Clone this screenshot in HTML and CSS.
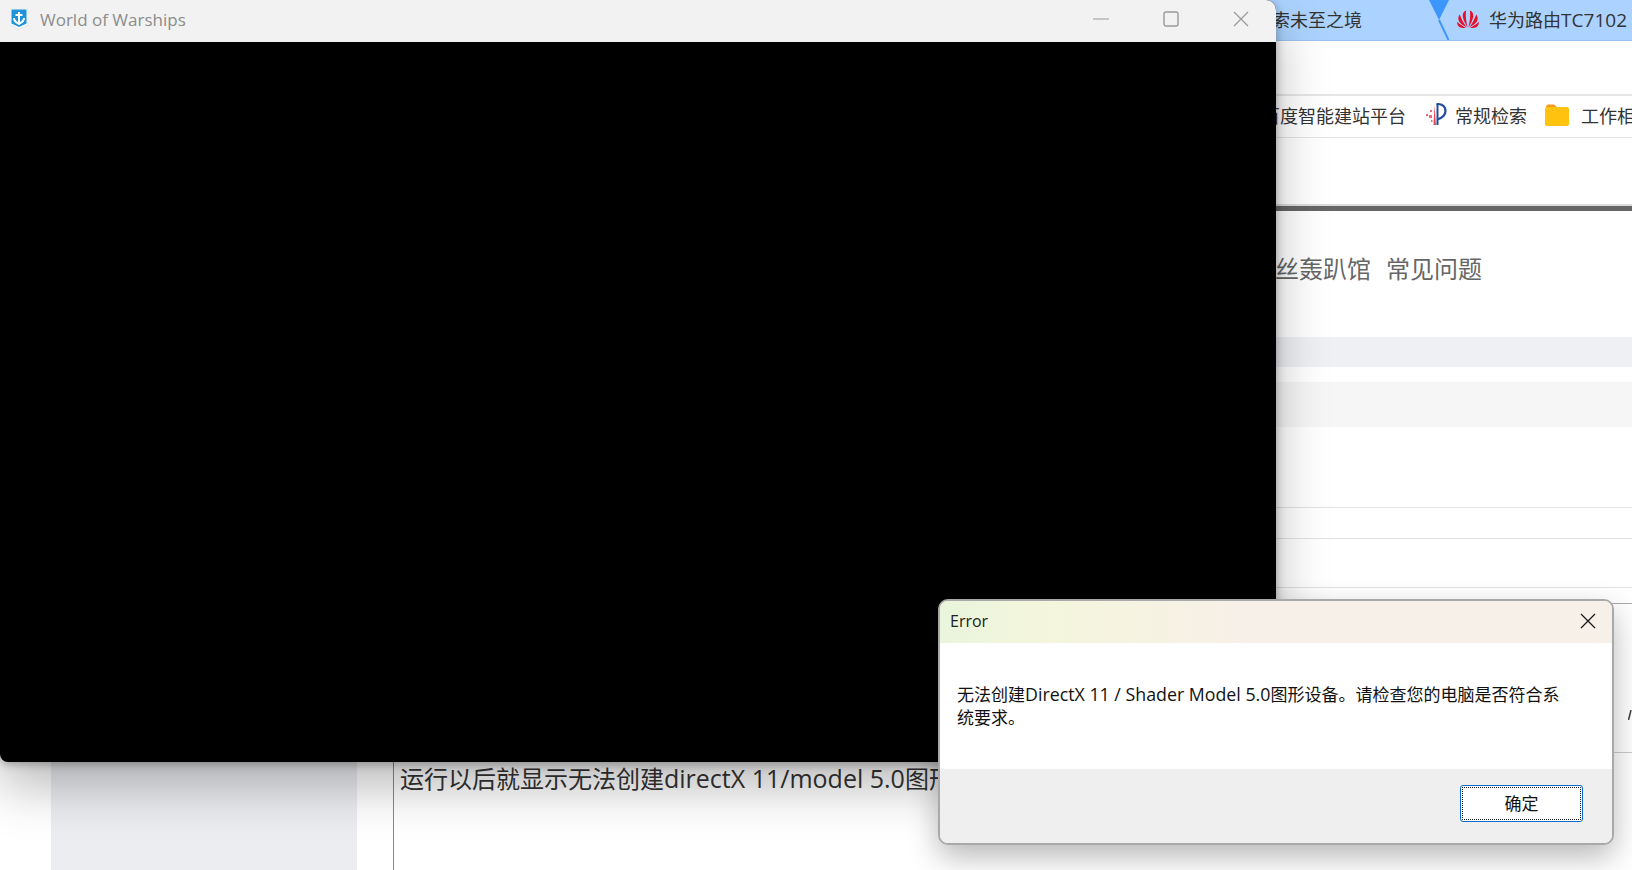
FILE: index.html
```html
<!DOCTYPE html>
<html lang="zh-CN">
<head>
    <meta charset="UTF-8">
    <meta name="viewport" content="width=device-width, initial-scale=1.0">
    <title>World of Warships</title>
    <link rel="stylesheet" href="styles.css">
</head>
<body>
    <!-- browser behind the windows -->
    <div class="browser">
        <div class="tabs">
            <span class="tab-text">探索未至之境</span>
            <svg class="tab-sep" width="20" height="41" viewBox="0 0 20 41">
                <path d="M0 0H20L10 20Z" fill="#3b97fb"/>
                <path d="M10 20L20 41" stroke="#3b97fb" stroke-width="2" fill="none"/>
            </svg>
            <svg class="huawei" width="22" height="18" viewBox="0 0 24 18" preserveAspectRatio="none">
                <g fill="#e60f27">
                    <path d="M11.700 17.500C10 12 9 5 10 .5C7.500 1 6 3.500 6.300 6.500C6.700 10 9.500 14.500 11.700 17.500Z"/>
                    <path d="M12.300 17.500C14 12 15 5 14 .5C16.500 1 18 3.500 17.700 6.500C17.300 10 14.500 14.500 12.300 17.500Z"/>
                    <path d="M10.800 17.500C7.500 13.500 4.500 9 3 4.500C1.300 6 .8 9 2.300 11.500C4 14 8 16 10.800 17.500Z"/>
                    <path d="M13.200 17.500C16.500 13.500 19.500 9 21 4.500C22.700 6 23.200 9 21.700 11.500C20 14 16 16 13.200 17.500Z"/>
                    <path d="M9.800 18C7 16.500 3 14.500 .3 11.800C-.2 14 1 16.500 3.700 17.500C5.800 18.200 8 18 9.800 18Z"/>
                    <path d="M14.200 18C17 16.500 21 14.500 23.700 11.800C24.200 14 23 16.500 20.300 17.500C18.200 18.200 16 18 14.200 18Z"/>
                </g>
            </svg>
            <span class="tab-text">华为路由<span class="tab-lat">TC7102</span></span>
        </div>
        <div class="toolbar"></div>
        <div class="bookmarks">
            <span class="bm-text">百度智能建站平台</span>
            <svg class="bm-icon" width="22" height="24" viewBox="0 0 22 24">
                <path d="M11.500 1C17 1 20.500 3.500 20.500 8C20.500 12.500 16.500 15 12.500 16.500" fill="none" stroke="#1f4e9c" stroke-width="2.200"/>
                <path d="M12.500 1V22" stroke="#1f4e9c" stroke-width="2"/>
                <path d="M9.500 2L11 22H8.500Z" fill="#e8485c"/>
                <g fill="#ee6a7a">
                    <rect x="5" y="7" width="2" height="2"/>
                    <rect x="1" y="11" width="2" height="2"/>
                    <rect x="4" y="12" width="3" height="3"/>
                    <rect x="6" y="17" width="1.500" height="2"/>
                </g>
            </svg>
            <span class="bm-text">常规检索</span>
            <svg class="bm-folder" width="24" height="22" viewBox="0 0 24 22">
                <path d="M1 3C1 1.500 2 .5 3 .5H9L12 3Z" fill="#f59a23"/>
                <rect y="3" width="24" height="19" rx="2" fill="#ffc20e"/>
            </svg>
            <span class="bm-text">工作相关</span>
        </div>
        <div class="spacer"></div>
        <div class="darkbar"></div>
        <nav class="nav">
            <a>粉丝轰趴馆</a>
            <a>常见问题</a>
        </nav>
        <div class="band-a"></div>
        <div class="band-b"></div>
        <div class="row row-1"></div>
        <div class="row row-2"></div>
        <div class="row row-3"></div>
        <div class="post-head">
            <svg class="post-glyph" width="4" height="10" viewBox="0 0 4 10"><path d="M.5 10L3 0" stroke="#444" stroke-width="1.600"/></svg>
        </div>
        <div class="post">
            <div class="post-side"></div>
            <div class="post-body">运行以后就显示无法创建<span class="post-lat">directX 11/model 5.0</span>图形设备</div>
        </div>
    </div>

    <!-- game window -->
    <div class="game">
        <div class="game-title">
            <svg class="game-logo" width="18" height="22" viewBox="0 0 18 22">
                <path d="M0 0H18V17L9 21.500L0 17Z" fill="#f7f9fb" stroke="#d5dce3" stroke-width=".6"/>
                <path d="M1.500 1.500H16.500V15.500L9 19L1.500 15.500Z" fill="#1f93d8"/>
                <g fill="none" stroke="#fff" stroke-width="2">
                    <path d="M9 4V16.500"/>
                    <path d="M5.500 7H12.500"/>
                    <path d="M4 10C4 13.500 6.500 14.500 9 16C11.500 14.500 14 13.500 14 10"/>
                </g>
            </svg>
            <span class="game-name">World of Warships</span>
            <div class="win-btns">
                <svg width="16" height="16" viewBox="0 0 16 16"><path d="M0 8H16" stroke="#9a9a9a"/></svg>
                <svg width="16" height="16" viewBox="0 0 16 16"><rect x="1" y="1" width="14" height="14" rx="2" fill="none" stroke="#9a9a9a" stroke-width="1.400"/></svg>
                <svg width="16" height="16" viewBox="0 0 16 16"><path d="M1 1L15 15M15 1L1 15" stroke="#9a9a9a" stroke-width="1.200"/></svg>
            </div>
        </div>
    </div>

    <!-- error dialog -->
    <div class="dialog">
        <div class="dialog-title">
            <span>Error</span>
            <svg width="16" height="16" viewBox="0 0 16 16"><path d="M1 1L15 15M15 1L1 15" stroke="#1a1a1a" stroke-width="1.300"/></svg>
        </div>
        <div class="dialog-body">无法创建<span class="dlg-lat">DirectX 11 / Shader Model 5.0</span>图形设备。请检查您的电脑是否符合系统要求。</div>
        <div class="dialog-foot">
            <button class="ok">确定</button>
        </div>
    </div>
</body>
</html>
```

FILE: styles.css
```css
html, body {
    height: 100%;
}
body {
    margin: 0;
    overflow: hidden;
    background-color: #fff;
    font-family: "Open Sans", "Noto Sans CJK SC", sans-serif;
    color: #333;
}
.browser {
    display: flex;
    flex-direction: column;
    height: 870px;
}
.tabs {
    display: flex;
    align-items: center;
    justify-content: flex-end;
    height: 41px;
    box-sizing: border-box;
    flex: none;
    background-color: #acd3ff;
    border-bottom: 1px solid #9cc3ee;
    overflow: hidden;
    white-space: nowrap;
    padding-right: 5px;
    padding-bottom: 2px;
}
.tab-text, .bm-text {
    font-size: 18px;
    color: #333;
}
.tab-lat {
    font-size: 19px;
}
.tab-sep {
    align-self: flex-start;
    margin-left: 67px;
    margin-right: 8px;
    flex: none;
}
.huawei {
    margin-right: 10px;
    flex: none;
}
.toolbar {
    height: 53px;
    flex: none;
    border-bottom: 2px solid #e6e6e6;
}
.bookmarks {
    display: flex;
    align-items: center;
    justify-content: flex-start;
    height: 38px;
    padding-bottom: 3px;
    flex: none;
    border-bottom: 1px solid #e4e4e4;
    padding-left: 1262px;
    white-space: nowrap;
    overflow: hidden;
}
.bm-icon {
    margin-left: 19px;
    margin-right: 8px;
    flex: none;
}
.bm-folder {
    margin-left: 18px;
    margin-right: 12px;
    flex: none;
}
.spacer {
    height: 66px;
    flex: none;
    border-bottom: 2px solid #dcdcdc;
}
.darkbar {
    height: 5px;
    flex: none;
    background-color: #666;
}
.nav {
    display: flex;
    gap: 15px;
    align-items: center;
    height: 126px;
    flex: none;
    padding-left: 1251px;
    padding-bottom: 14px;
    box-sizing: border-box;
    font-size: 24px;
    color: #666;
    white-space: nowrap;
}
.band-a {
    height: 30px;
    flex: none;
    background-color: #eff0f4;
}
.band-b {
    height: 45px;
    flex: none;
    margin-top: 15px;
    background-color: #f6f6f6;
}
.row {
    flex: none;
    border-bottom: 1px solid #e2e2e2;
}
.row-1 {
    height: 80px;
}
.row-2 {
    height: 30px;
}
.row-3 {
    height: 48px;
}
.post-head {
    height: 165px;
    flex: none;
    border-top: 15px solid transparent;
    border-bottom: 1px solid #ccc;
    box-shadow: inset 0 1px 0 #aaa;
    display: flex;
    justify-content: flex-end;
    align-items: flex-end;
    box-sizing: border-box;
    padding-bottom: 32px;
}
.post {
    display: flex;
    flex: 1;
    padding-left: 51px;
}
.post-side {
    width: 306px;
    background-color: #eceDf1;
}
.post-body {
    margin-left: 36px;
    padding-left: 6px;
    padding-top: 7px;
    border-left: 1px solid #888;
    font-size: 24px;
    line-height: 36px;
    white-space: nowrap;
    color: #333;
}
.post-lat {
    font-size: 25px;
}

/* windows on top */
.game {
    position: absolute;
    left: 0;
    top: 0;
    width: 1276px;
    height: 762px;
    background-color: #000;
    border-radius: 0 10px 8px 8px;
    box-shadow: 0 24px 52px rgba(0, 0, 0, 0.28), 0 2px 10px rgba(0, 0, 0, 0.3);
}
.game-title {
    display: flex;
    align-items: center;
    height: 42px;
    box-sizing: border-box;
    background-color: #f2f2f2;
    border-radius: 0 10px 0 0;
    padding-left: 10px;
    padding-bottom: 4px;
}
.game-logo {
    flex: none;
}
.game-name {
    margin-left: 12px;
    font-size: 17px;
    color: #8c8c8c;
}
.win-btns {
    display: flex;
    gap: 54px;
    margin-left: auto;
    margin-right: 27px;
}
.dialog {
    position: absolute;
    left: 938px;
    top: 599px;
    width: 676px;
    height: 246px;
    box-sizing: border-box;
    display: flex;
    flex-direction: column;
    border: 2px solid #a9a9a9;
    border-radius: 10px;
    overflow: hidden;
    background-color: #fff;
    box-shadow: 0 12px 30px rgba(0, 0, 0, 0.28);
}
.dialog-title {
    display: flex;
    align-items: center;
    justify-content: space-between;
    height: 42px;
    box-sizing: border-box;
    flex: none;
    padding: 0 16px 3px 10px;
    background: linear-gradient(90deg, #e9f5dc 0%, #f4f6dc 15%, #f7f0e8 45%, #f7f0e8 100%);
    font-size: 16px;
    color: #222;
}
.dialog-body {
    flex: 1;
    padding: 40px 40px 0 17px;
    font-size: 17px;
    line-height: 23px;
    color: #111;
}
.dlg-lat {
    font-size: 17.8px;
}
.dialog-foot {
    display: flex;
    justify-content: flex-end;
    align-items: flex-start;
    height: 74px;
    flex: none;
    box-sizing: border-box;
    padding: 16px 29px 0 0;
    background-color: #efefef;
}
.ok {
    width: 123px;
    height: 37px;
    padding: 0 0 3px;
    background-color: #fff;
    border: 1px solid #0a6cc8;
    border-radius: 3px;
    outline: 1px dotted #111;
    outline-offset: -3px;
    font-family: "Noto Sans CJK SC", sans-serif;
    font-size: 17px;
    color: #111;
}
```
